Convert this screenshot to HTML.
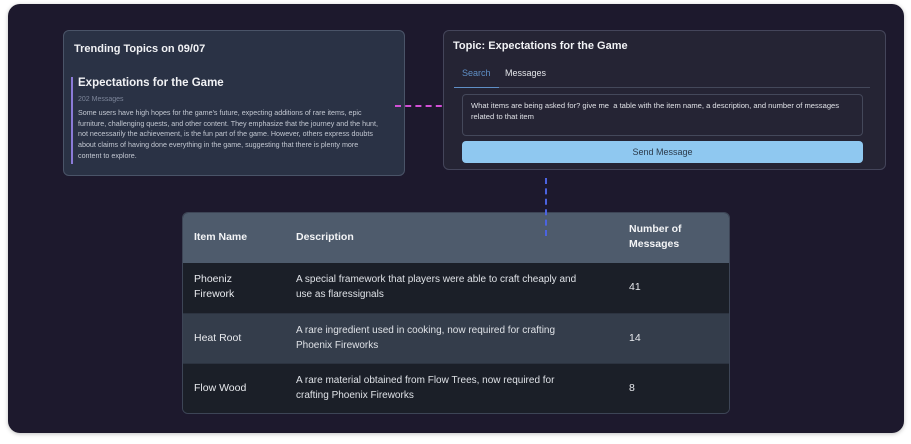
<!DOCTYPE html>
<html><head><meta charset="utf-8"><style>
*{box-sizing:border-box;margin:0;padding:0}
body{width:911px;height:444px;background:#fff;font-family:"Liberation Sans",sans-serif;position:relative;overflow:hidden}
.frame{position:absolute;left:8px;top:4px;width:896px;height:429px;background:#1d192d;border-radius:12px;box-shadow:0 1px 4px rgba(0,0,0,.25)}
.card1{position:absolute;left:63px;top:30px;width:342px;height:146px;background:#2a3245;border:1px solid #4a5468;border-radius:6px}
.card1 h2{position:absolute;left:10px;top:12px;font-size:11px;color:#f1f2f5;font-weight:bold}
.bar{position:absolute;left:7px;top:46px;width:2px;height:87px;background:#8b7bd8}
.card1 h3{position:absolute;left:14px;top:46px;font-size:11.5px;color:#f1f2f5;font-weight:bold}
.card1 .cnt{position:absolute;left:14px;top:65px;font-size:7px;color:#7c8599}
.card1 p{position:absolute;left:14px;top:77px;width:305px;font-size:7.15px;line-height:10.7px;color:#c3c8d2}
.card2{position:absolute;left:443px;top:30px;width:443px;height:140px;background:#252434;border:1px solid #44455a;border-radius:6px}
.card2 h2{position:absolute;left:9px;top:9px;font-size:11px;color:#f1f2f5;font-weight:bold}
.tabs{position:absolute;left:10px;top:32px;width:416px;height:25px;border-bottom:1px solid #44485a}
.tab{position:absolute;top:5px;font-size:9px}
.t1{left:8px;color:#5f8fc6}
.t2{left:51px;color:#e4e6ea}
.ul{position:absolute;left:0;bottom:-1px;width:45px;height:1px;background:#5f8fc6}
.ta{position:absolute;left:18px;top:63px;width:401px;height:42px;border:1px solid #44485a;border-radius:4px;padding:6px 8px;font-size:7.6px;line-height:10.5px;color:#dfe1e6}
.btn{position:absolute;left:18px;top:110px;width:401px;height:22px;background:#8fc8f0;border-radius:4px;text-align:center;line-height:22px;font-size:9px;color:#2b3a4a}
.pink{position:absolute;left:395px;top:105px;width:57px;height:0;border-top:2px dashed #d24fd6}
.blue{position:absolute;left:545px;top:178px;width:0;height:58px;border-left:2px dashed #4b63e0;z-index:5}
.tbl{position:absolute;left:182px;top:212px;width:548px;height:202px;border:1px solid #3d4556;border-radius:6px;overflow:hidden;background:#1b1f28}
.hd{position:absolute;left:0;top:0;width:100%;height:50px;background:#4e5b6c}
.row{position:absolute;left:0;width:100%;height:50px}
.c{position:absolute;font-size:10.5px;line-height:15px;color:#e8eaee;white-space:nowrap}
.h .c{font-weight:bold;color:#f3f4f6}
.d{font-size:10px;color:#dfe2e7}
</style></head><body>
<div class="frame"></div>
<div class="card1">
<h2>Trending Topics on 09/07</h2>
<div class="bar"></div>
<h3>Expectations for the Game</h3>
<div class="cnt">202 Messages</div>
<p>Some users have high hopes for the game's future, expecting additions of rare items, epic furniture, challenging quests, and other content. They emphasize that the journey and the hunt, not necessarily the achievement, is the fun part of the game. However, others express doubts about claims of having done everything in the game, suggesting that there is plenty more content to explore.</p>
</div>
<div class="pink"></div>
<div class="card2">
<h2>Topic: Expectations for the Game</h2>
<div class="tabs"><div class="tab t1">Search</div><div class="tab t2">Messages</div><div class="ul"></div></div>
<div class="ta">What items are being asked for? give me &nbsp;a table with the item name, a description, and number of messages related to that item</div>
<div class="btn">Send Message</div>
</div>
<div class="blue"></div>
<div class="tbl">
<div class="hd h"><div class="c" style="left:11px;top:17px">Item Name</div><div class="c" style="left:113px;top:17px">Description</div><div class="c" style="left:446px;top:9px">Number of<br>Messages</div></div>
<div class="row" style="top:50px;background:#1b1f28"><div class="c" style="left:11px;top:9px">Phoeniz<br>Firework</div><div class="c d" style="left:113px;top:9px">A special framework that players were able to craft cheaply and<br>use as flaressignals</div><div class="c" style="left:446px;top:17px">41</div></div>
<div class="row" style="top:100px;background:#343d4b;border-top:1px solid #2c3340"><div class="c" style="left:11px;top:17px">Heat Root</div><div class="c d" style="left:113px;top:9px">A rare ingredient used in cooking, now required for crafting<br>Phoenix Fireworks</div><div class="c" style="left:446px;top:17px">14</div></div>
<div class="row" style="top:150px;background:#1b1f28;border-top:1px solid #2c3340"><div class="c" style="left:11px;top:17px">Flow Wood</div><div class="c d" style="left:113px;top:9px">A rare material obtained from Flow Trees, now required for<br>crafting Phoenix Fireworks</div><div class="c" style="left:446px;top:17px">8</div></div>
</div>
</body></html>
